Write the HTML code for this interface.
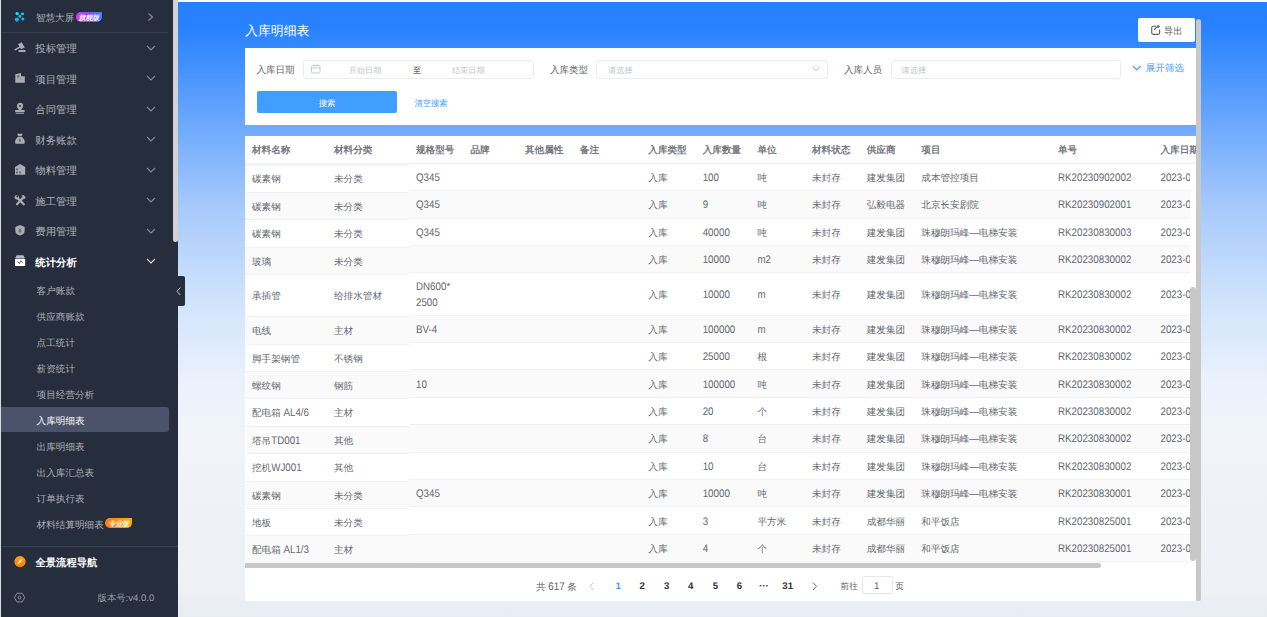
<!DOCTYPE html><html><head><meta charset="utf-8"><style>
html,body{margin:0;padding:0;}
body{width:1267px;height:617px;overflow:hidden;position:relative;font-family:"Liberation Sans",sans-serif;background:#eef2f8;text-rendering:geometricPrecision;}
.t{position:absolute;white-space:nowrap;}
.b{position:absolute;}
svg{position:absolute;overflow:visible;}
</style></head><body>
<div class="b" style="left:178px;top:0px;width:1089px;height:617px;background:linear-gradient(180deg,#2680ff 0px,#2882ff 28px,#a6c9fc 205px,#d0e3fc 300px,#eaf1fc 380px,#f0f4fa 430px,#edf1f6 590px,#e8ecf3 617px);"></div>
<div class="b" style="left:178px;top:0px;width:1089px;height:1.5px;background:#ffffff;"></div>
<div class="b" style="left:0px;top:0px;width:1px;height:617px;background:#d8dbe0;"></div>
<div class="b" style="left:1px;top:0px;width:177px;height:617px;background:#262e3d;"></div>
<div class="b" style="left:173px;top:0px;width:5px;height:242px;background:#d3d3d3;border-radius:0 0 2.5px 2.5px;"></div>
<div class="b" style="left:1px;top:32px;width:167px;height:1px;background:#363e4e;"></div>
<div class="t" style="left:35.9px;top:11px;height:16px;line-height:16px;font-size:9.6px;color:#adb1b8;font-weight:400;">智慧大屏</div>
<div class="t" style="left:35.2px;top:42px;height:16px;line-height:16px;font-size:10.45px;color:#adb1b8;font-weight:400;">投标管理</div>
<div class="t" style="left:35.2px;top:73px;height:16px;line-height:16px;font-size:10.45px;color:#adb1b8;font-weight:400;">项目管理</div>
<div class="t" style="left:35.2px;top:103px;height:16px;line-height:16px;font-size:10.45px;color:#adb1b8;font-weight:400;">合同管理</div>
<div class="t" style="left:35.2px;top:134px;height:16px;line-height:16px;font-size:10.45px;color:#adb1b8;font-weight:400;">财务账款</div>
<div class="t" style="left:35.2px;top:164px;height:16px;line-height:16px;font-size:10.45px;color:#adb1b8;font-weight:400;">物料管理</div>
<div class="t" style="left:35.2px;top:195px;height:16px;line-height:16px;font-size:10.45px;color:#adb1b8;font-weight:400;">施工管理</div>
<div class="t" style="left:35.2px;top:225px;height:16px;line-height:16px;font-size:10.45px;color:#adb1b8;font-weight:400;">费用管理</div>
<div class="t" style="left:35.2px;top:256px;height:16px;line-height:16px;font-size:10.45px;color:#ffffff;font-weight:700;">统计分析</div>
<div class="b" style="left:76.1px;top:12.1px;width:26.3px;height:9.6px;border-radius:4.8px 0 4.8px 4.8px;background:linear-gradient(90deg,#d83cf6,#8a4ff2 50%,#3a80f6);"></div>
<div class="t" style="left:78.5px;top:11px;height:16px;line-height:16px;font-size:6.9px;color:#f4eaff;font-weight:700;font-style:italic;">旗舰版</div>
<svg width="10" height="10" style="left:146px;top:12px"><path d="M2.5 1.5 L6.5 5 L2.5 8.5" stroke="#8a8f97" stroke-width="1.1" fill="none"/></svg>
<svg width="10" height="6" style="left:145.5px;top:44.5px"><path d="M1 1 L5 5 L9 1" stroke="#858a92" stroke-width="1.1" fill="none"/></svg>
<svg width="10" height="6" style="left:145.5px;top:75.0px"><path d="M1 1 L5 5 L9 1" stroke="#858a92" stroke-width="1.1" fill="none"/></svg>
<svg width="10" height="6" style="left:145.5px;top:105.5px"><path d="M1 1 L5 5 L9 1" stroke="#858a92" stroke-width="1.1" fill="none"/></svg>
<svg width="10" height="6" style="left:145.5px;top:136.0px"><path d="M1 1 L5 5 L9 1" stroke="#858a92" stroke-width="1.1" fill="none"/></svg>
<svg width="10" height="6" style="left:145.5px;top:166.5px"><path d="M1 1 L5 5 L9 1" stroke="#858a92" stroke-width="1.1" fill="none"/></svg>
<svg width="10" height="6" style="left:145.5px;top:197.1px"><path d="M1 1 L5 5 L9 1" stroke="#858a92" stroke-width="1.1" fill="none"/></svg>
<svg width="10" height="6" style="left:145.5px;top:227.6px"><path d="M1 1 L5 5 L9 1" stroke="#858a92" stroke-width="1.1" fill="none"/></svg>
<svg width="10" height="6" style="left:145.5px;top:258.1px"><path d="M1 1 L5 5 L9 1" stroke="#e8e9ec" stroke-width="1.1" fill="none"/></svg>
<svg width="16" height="16" viewBox="0 0 16 16" style="left:12px;top:9px"><circle cx="5.2" cy="4.6" r="1.7" fill="#16e6f2"/><circle cx="10.5" cy="4.9" r="1.4" fill="#14def5"/><circle cx="7.9" cy="7.4" r="1.35" fill="#10d2f8"/><circle cx="4.9" cy="10.6" r="2.1" fill="#12aef6"/><circle cx="10.8" cy="9.9" r="1.5" fill="#16b8f8"/></svg>
<svg width="16" height="16" viewBox="0 0 16 16" style="left:12px;top:40px"><path d="M6 4.3 L9.6 2.3 L12.8 7.4 L9.2 9.3 Z" fill="#a9aeb6"/><path d="M3.3 9.6 L7.8 7.1" stroke="#a9aeb6" stroke-width="1.6" stroke-linecap="round"/><rect x="6.6" y="10.1" width="6.9" height="1.9" rx="0.3" fill="#a9aeb6"/></svg>
<svg width="16" height="16" viewBox="0 0 16 16" style="left:12px;top:70px"><path d="M3.3 4.2 L9 3 L9 6.3 L12.8 6.3 L12.8 12.8 L3.3 12.8 Z" fill="#a9aeb6"/><rect x="5.2" y="5.3" width="2" height="2.2" fill="#5a6170"/><rect x="8.5" y="8" width="1" height="2" fill="#8a909a"/></svg>
<svg width="16" height="16" viewBox="0 0 16 16" style="left:12px;top:101px"><circle cx="8" cy="4.9" r="2.05" stroke="#a9aeb6" stroke-width="2.1" fill="none"/><rect x="6.6" y="6.8" width="2.8" height="2.5" fill="#a9aeb6"/><rect x="3" y="9" width="9.8" height="2" rx="0.8" fill="#a9aeb6"/><rect x="3.8" y="11.6" width="8.2" height="1.3" fill="#a9aeb6" opacity="0.85"/></svg>
<svg width="16" height="16" viewBox="0 0 16 16" style="left:12px;top:131px"><path d="M5.2 3 Q6.5 2.2 7.9 3.1 Q9.3 2.2 10.6 3 L9.6 4.9 L6.2 4.9 Z" fill="#a9aeb6"/><path d="M5.8 5.8 L10 5.8 Q12.8 8.5 12.8 11.8 Q12.8 12.8 11.8 12.8 L4 12.8 Q3 12.8 3 11.8 Q3 8.5 5.8 5.8 Z" fill="#a9aeb6"/><ellipse cx="7.9" cy="9.3" rx="0.9" ry="1.5" fill="#5a6170"/></svg>
<svg width="16" height="16" viewBox="0 0 16 16" style="left:12px;top:161px"><path d="M3 6 L8 3 L13.2 6 L13.2 13.8 L3 13.8 Z" fill="#a9aeb6"/><rect x="4.2" y="7.5" width="1.6" height="1.7" fill="#4a5160"/><rect x="4.2" y="10.6" width="1.6" height="1.6" fill="#4a5160"/><rect x="7.2" y="10.6" width="1.6" height="1.6" fill="#4a5160"/></svg>
<svg width="16" height="16" viewBox="0 0 16 16" style="left:12px;top:192px"><path d="M5 12.3 L11.3 5.5" stroke="#a9aeb6" stroke-width="2.2" stroke-linecap="round"/><path d="M5.5 6 L11.8 12.3" stroke="#a9aeb6" stroke-width="2.2" stroke-linecap="round"/><circle cx="4.8" cy="5.2" r="2.2" fill="#a9aeb6"/><circle cx="5.3" cy="4.2" r="1" fill="#262e3d"/><path d="M9.4 3.5 L11.5 3 L13.8 5.5 L12.3 7 Z" fill="#a9aeb6"/></svg>
<svg width="16" height="16" viewBox="0 0 16 16" style="left:12px;top:222px"><path d="M8 3.1 L12.7 4.9 L12.7 8.8 Q12.7 12.3 8 13.6 Q3.3 12.3 3.3 8.8 L3.3 4.9 Z" fill="#a9aeb6"/><path d="M6.6 6.2 L8 8 L9.4 6.2 M6.5 8.6 H9.5 M6.5 9.8 H9.5 M8 8 V10.8" stroke="#5a6170" stroke-width="0.8" fill="none"/></svg>
<svg width="16" height="16" viewBox="0 0 16 16" style="left:12px;top:252px"><path d="M4.6 3.2 L11.4 3.2 L13 6.5 L3 6.5 Z" fill="#b4b8bf"/><rect x="3" y="7" width="10.2" height="7" fill="#ffffff"/><path d="M5.5 9.5 L7.4 11.6 L8.8 8.6 L10.6 10.6" stroke="#4a5160" stroke-width="0.9" fill="none"/></svg>
<div class="b" style="left:1px;top:406.8px;width:167.7px;height:25.7px;background:#4a5369;border-radius:0 3px 3px 0;"></div>
<div class="t" style="left:36.6px;top:284px;height:16px;line-height:16px;font-size:9.6px;color:#adb1b8;font-weight:400;">客户账款</div>
<div class="t" style="left:36.6px;top:310px;height:16px;line-height:16px;font-size:9.6px;color:#adb1b8;font-weight:400;">供应商账款</div>
<div class="t" style="left:36.6px;top:336px;height:16px;line-height:16px;font-size:9.6px;color:#adb1b8;font-weight:400;">点工统计</div>
<div class="t" style="left:36.6px;top:362px;height:16px;line-height:16px;font-size:9.6px;color:#adb1b8;font-weight:400;">薪资统计</div>
<div class="t" style="left:36.6px;top:388px;height:16px;line-height:16px;font-size:9.6px;color:#adb1b8;font-weight:400;">项目经营分析</div>
<div class="t" style="left:36.6px;top:414px;height:16px;line-height:16px;font-size:9.6px;color:#ffffff;font-weight:400;">入库明细表</div>
<div class="t" style="left:36.6px;top:440px;height:16px;line-height:16px;font-size:9.6px;color:#adb1b8;font-weight:400;">出库明细表</div>
<div class="t" style="left:36.6px;top:466px;height:16px;line-height:16px;font-size:9.6px;color:#adb1b8;font-weight:400;">出入库汇总表</div>
<div class="t" style="left:36.6px;top:492px;height:16px;line-height:16px;font-size:9.6px;color:#adb1b8;font-weight:400;">订单执行表</div>
<div class="t" style="left:36.6px;top:518px;height:16px;line-height:16px;font-size:9.6px;color:#adb1b8;font-weight:400;">材料结算明细表</div>
<div class="b" style="left:105px;top:518.2px;width:27.1px;height:9.8px;border-radius:4.9px 0 4.9px 4.9px;background:linear-gradient(90deg,#ff7d1f,#ffaa0a);"></div>
<div class="t" style="left:108.5px;top:517px;height:16px;line-height:16px;font-size:6.9px;color:#fff3e0;font-weight:700;font-style:italic;">专业版</div>
<div class="t" style="left:36.6px;top:544px;height:16px;line-height:16px;font-size:9.6px;color:#adb1b8;font-weight:400;">库存统计表</div>
<div class="b" style="left:1px;top:546.5px;width:177px;height:71px;background:#262e3d;"></div>
<div class="b" style="left:1px;top:546px;width:177px;height:1px;background:#3a4252;"></div>
<svg width="12" height="12" style="left:14.35px;top:556.25px"><defs><linearGradient id="cg" x1="0" y1="0" x2="0" y2="1"><stop offset="0" stop-color="#ffa51c"/><stop offset="1" stop-color="#ff7800"/></linearGradient></defs><circle cx="6" cy="5.6" r="5.6" fill="url(#cg)"/><path d="M8.8 2.8 L6.6 6.4 L3.2 8.4 L5.4 4.8 Z" fill="#ffffff" opacity="0.9"/></svg>
<div class="t" style="left:35.5px;top:556px;height:16px;line-height:16px;font-size:10.3px;color:#ffffff;font-weight:700;">全景流程导航</div>
<svg width="12" height="12" style="left:14px;top:591.6px"><path d="M3 1.3 L8.2 1.3 L10.8 5.6 L8.2 9.9 L3 9.9 L0.4 5.6 Z" stroke="#8d929a" stroke-width="1" fill="none" stroke-linejoin="round"/><circle cx="5.6" cy="5.6" r="1.4" stroke="#8d929a" stroke-width="0.9" fill="none"/></svg>
<div class="t" style="left:97.6px;top:590px;height:16px;line-height:16px;font-size:9.3px;color:#9a9ea6;font-weight:400;">版本号<span style="font-size:9.6px">:v4.0.0</span></div>
<div class="b" style="left:178px;top:276.2px;width:6.8px;height:29.4px;background:#262e3d;border-radius:0 2px 2px 0;"></div>
<svg width="6" height="9" style="left:175.5px;top:287px"><path d="M4.3 0.6 L1 4.3 L4.3 8" stroke="#c8ccd2" stroke-width="1" fill="none"/></svg>
<div class="t" style="left:245px;top:23px;height:16px;line-height:16px;font-size:12.9px;color:#ffffff;font-weight:400;">入库明细表</div>
<div class="b" style="left:1137.9px;top:18px;width:57.3px;height:23.8px;background:#ffffff;border-radius:2px;"></div>
<svg width="16" height="16" viewBox="0 0 16 16" style="left:1148px;top:22px"><path d="M8.3 4.2 H5.2 Q3.7 4.2 3.7 5.7 V10.8 Q3.7 12.3 5.2 12.3 H10.1 Q11.6 12.3 11.6 10.8 V7.4" stroke="#606266" stroke-width="1.15" fill="none"/><path d="M6.3 7.9 Q7.3 5.6 10 4.6" stroke="#606266" stroke-width="1.15" fill="none"/><path d="M9.2 2.8 L12.2 4.2 L9.9 6.3 Z" fill="#606266"/></svg>
<div class="t" style="left:1164px;top:23px;height:16px;line-height:16px;font-size:9.3px;color:#606266;font-weight:400;">导出</div>
<div class="b" style="left:245px;top:48px;width:951px;height:77px;background:#ffffff;"></div>
<div class="t" style="left:256.4px;top:63px;height:16px;line-height:16px;font-size:9.5px;color:#606266;font-weight:400;">入库日期</div>
<div class="b" style="left:303.3px;top:59.9px;width:230.5px;height:18.7px;border:1px solid #e9ebf0;border-radius:2.5px;box-sizing:border-box;"></div>
<svg width="10" height="10" style="left:310.5px;top:64.3px"><rect x="0.5" y="1.5" width="8.5" height="7.5" rx="1" stroke="#c0c4cc" stroke-width="0.9" fill="none"/><path d="M0.5 4 H9 M3 0.5 V2.5 M6.5 0.5 V2.5" stroke="#c0c4cc" stroke-width="0.9"/></svg>
<div class="t" style="left:348.7px;top:63px;height:16px;line-height:16px;font-size:8.2px;color:#c0c4cc;font-weight:400;">开始日期</div>
<div class="t" style="left:413px;top:63px;height:16px;line-height:16px;font-size:8.2px;color:#303133;font-weight:400;">至</div>
<div class="t" style="left:451.9px;top:63px;height:16px;line-height:16px;font-size:8.2px;color:#c0c4cc;font-weight:400;">结束日期</div>
<div class="t" style="left:549.9px;top:63px;height:16px;line-height:16px;font-size:9.5px;color:#606266;font-weight:400;">入库类型</div>
<div class="b" style="left:596.4px;top:59.9px;width:231.3px;height:18.7px;border:1px solid #e9ebf0;border-radius:2.5px;box-sizing:border-box;"></div>
<div class="t" style="left:608px;top:63px;height:16px;line-height:16px;font-size:8.2px;color:#c0c4cc;font-weight:400;">请选择</div>
<svg width="8" height="5" style="left:811.5px;top:67px"><path d="M0.5 0.5 L4 4 L7.5 0.5" stroke="#c0c4cc" stroke-width="0.9" fill="none"/></svg>
<div class="t" style="left:843.9px;top:63px;height:16px;line-height:16px;font-size:9.5px;color:#606266;font-weight:400;">入库人员</div>
<div class="b" style="left:890.6px;top:59.7px;width:230.9px;height:19px;border:1px solid #e9ebf0;border-radius:2.5px;box-sizing:border-box;"></div>
<div class="t" style="left:901.6px;top:63px;height:16px;line-height:16px;font-size:8.2px;color:#c0c4cc;font-weight:400;">请选择</div>
<svg width="10" height="6" style="left:1131.8px;top:65px"><path d="M0.8 0.8 L4.8 4.8 L8.8 0.8" stroke="#409eff" stroke-width="1.2" fill="none"/></svg>
<div class="t" style="left:1145.7px;top:61px;height:16px;line-height:16px;font-size:9.6px;color:#409eff;font-weight:400;">展开筛选</div>
<div class="b" style="left:256.7px;top:91.4px;width:140.3px;height:22.1px;background:#409eff;border-radius:2px;"></div>
<div class="t" style="left:318.7px;top:95px;height:16px;line-height:16px;font-size:8.4px;color:#ffffff;font-weight:400;">搜索</div>
<div class="t" style="left:414.4px;top:95px;height:16px;line-height:16px;font-size:8.3px;color:#409eff;font-weight:400;">清空搜索</div>
<div class="b" style="left:245px;top:136px;width:951px;height:465px;background:#ffffff;border-radius:0 0 3px 3px;"></div>
<div class="t" style="left:252px;top:143px;height:16px;line-height:16px;font-size:9.6px;color:#75787e;font-weight:700;">材料名称</div>
<div class="t" style="left:334px;top:143px;height:16px;line-height:16px;font-size:9.6px;color:#75787e;font-weight:700;">材料分类</div>
<div class="t" style="left:416px;top:143px;height:16px;line-height:16px;font-size:9.6px;color:#75787e;font-weight:700;">规格型号</div>
<div class="t" style="left:470.5px;top:143px;height:16px;line-height:16px;font-size:9.6px;color:#75787e;font-weight:700;">品牌</div>
<div class="t" style="left:525px;top:143px;height:16px;line-height:16px;font-size:9.6px;color:#75787e;font-weight:700;">其他属性</div>
<div class="t" style="left:580px;top:143px;height:16px;line-height:16px;font-size:9.6px;color:#75787e;font-weight:700;">备注</div>
<div class="t" style="left:648.3px;top:143px;height:16px;line-height:16px;font-size:9.6px;color:#75787e;font-weight:700;">入库类型</div>
<div class="t" style="left:702.7px;top:143px;height:16px;line-height:16px;font-size:9.6px;color:#75787e;font-weight:700;">入库数量</div>
<div class="t" style="left:757.4px;top:143px;height:16px;line-height:16px;font-size:9.6px;color:#75787e;font-weight:700;">单位</div>
<div class="t" style="left:812px;top:143px;height:16px;line-height:16px;font-size:9.6px;color:#75787e;font-weight:700;">材料状态</div>
<div class="t" style="left:866.7px;top:143px;height:16px;line-height:16px;font-size:9.6px;color:#75787e;font-weight:700;">供应商</div>
<div class="t" style="left:921.3px;top:143px;height:16px;line-height:16px;font-size:9.6px;color:#75787e;font-weight:700;">项目</div>
<div class="t" style="left:1058px;top:143px;height:16px;line-height:16px;font-size:9.6px;color:#75787e;font-weight:700;">单号</div>
<div class="t" style="left:1160.5px;top:143px;height:16px;line-height:16px;font-size:9.6px;color:#75787e;font-weight:700;">入库日期</div>
<div class="b" style="left:409px;top:162.6px;width:787px;height:1.2px;background:#ebedf2;"></div>
<div class="b" style="left:409px;top:163px;width:781px;height:400px;overflow:hidden;">
<div class="b" style="left:0;top:0.80px;width:800px;height:27.40px;background:#ffffff;border-bottom:1px solid #f1f2f6;box-sizing:border-box;"></div>
<div class="t" style="left:7px;top:8px;height:16px;line-height:16px;font-size:9.6px;color:#66696e;font-weight:400;"><span style="font-size:9.77px;display:inline-block;transform:scaleY(1.12);transform-origin:0 7.8px">Q345</span></div>
<div class="t" style="left:239.29999999999995px;top:8px;height:16px;line-height:16px;font-size:9.6px;color:#66696e;font-weight:400;">入库</div>
<div class="t" style="left:293.70000000000005px;top:8px;height:16px;line-height:16px;font-size:9.6px;color:#66696e;font-weight:400;"><span style="font-size:9.77px;display:inline-block;transform:scaleY(1.12);transform-origin:0 7.8px">100</span></div>
<div class="t" style="left:348.4px;top:8px;height:16px;line-height:16px;font-size:9.6px;color:#66696e;font-weight:400;">吨</div>
<div class="t" style="left:403px;top:8px;height:16px;line-height:16px;font-size:9.6px;color:#66696e;font-weight:400;">未封存</div>
<div class="t" style="left:457.70000000000005px;top:8px;height:16px;line-height:16px;font-size:9.6px;color:#66696e;font-weight:400;">建发集团</div>
<div class="t" style="left:512.3px;top:8px;height:16px;line-height:16px;font-size:9.6px;color:#66696e;font-weight:400;">成本管控项目</div>
<div class="t" style="left:649px;top:8px;height:16px;line-height:16px;font-size:9.6px;color:#66696e;font-weight:400;"><span style="font-size:9.77px;display:inline-block;transform:scaleY(1.12);transform-origin:0 7.8px">RK20230902002</span></div>
<div class="t" style="left:751.5px;top:8px;height:16px;line-height:16px;font-size:9.6px;color:#66696e;font-weight:400;"><span style="font-size:9.77px;display:inline-block;transform:scaleY(1.12);transform-origin:0 7.8px">2023-0</span></div>
<div class="b" style="left:0;top:28.20px;width:800px;height:27.40px;background:#fafafa;border-bottom:1px solid #f1f2f6;box-sizing:border-box;"></div>
<div class="t" style="left:7px;top:35px;height:16px;line-height:16px;font-size:9.6px;color:#66696e;font-weight:400;"><span style="font-size:9.77px;display:inline-block;transform:scaleY(1.12);transform-origin:0 7.8px">Q345</span></div>
<div class="t" style="left:239.29999999999995px;top:35px;height:16px;line-height:16px;font-size:9.6px;color:#66696e;font-weight:400;">入库</div>
<div class="t" style="left:293.70000000000005px;top:35px;height:16px;line-height:16px;font-size:9.6px;color:#66696e;font-weight:400;"><span style="font-size:9.77px;display:inline-block;transform:scaleY(1.12);transform-origin:0 7.8px">9</span></div>
<div class="t" style="left:348.4px;top:35px;height:16px;line-height:16px;font-size:9.6px;color:#66696e;font-weight:400;">吨</div>
<div class="t" style="left:403px;top:35px;height:16px;line-height:16px;font-size:9.6px;color:#66696e;font-weight:400;">未封存</div>
<div class="t" style="left:457.70000000000005px;top:35px;height:16px;line-height:16px;font-size:9.6px;color:#66696e;font-weight:400;">弘毅电器</div>
<div class="t" style="left:512.3px;top:35px;height:16px;line-height:16px;font-size:9.6px;color:#66696e;font-weight:400;">北京长安剧院</div>
<div class="t" style="left:649px;top:35px;height:16px;line-height:16px;font-size:9.6px;color:#66696e;font-weight:400;"><span style="font-size:9.77px;display:inline-block;transform:scaleY(1.12);transform-origin:0 7.8px">RK20230902001</span></div>
<div class="t" style="left:751.5px;top:35px;height:16px;line-height:16px;font-size:9.6px;color:#66696e;font-weight:400;"><span style="font-size:9.77px;display:inline-block;transform:scaleY(1.12);transform-origin:0 7.8px">2023-0</span></div>
<div class="b" style="left:0;top:55.60px;width:800px;height:27.40px;background:#ffffff;border-bottom:1px solid #f1f2f6;box-sizing:border-box;"></div>
<div class="t" style="left:7px;top:63px;height:16px;line-height:16px;font-size:9.6px;color:#66696e;font-weight:400;"><span style="font-size:9.77px;display:inline-block;transform:scaleY(1.12);transform-origin:0 7.8px">Q345</span></div>
<div class="t" style="left:239.29999999999995px;top:63px;height:16px;line-height:16px;font-size:9.6px;color:#66696e;font-weight:400;">入库</div>
<div class="t" style="left:293.70000000000005px;top:63px;height:16px;line-height:16px;font-size:9.6px;color:#66696e;font-weight:400;"><span style="font-size:9.77px;display:inline-block;transform:scaleY(1.12);transform-origin:0 7.8px">40000</span></div>
<div class="t" style="left:348.4px;top:63px;height:16px;line-height:16px;font-size:9.6px;color:#66696e;font-weight:400;">吨</div>
<div class="t" style="left:403px;top:63px;height:16px;line-height:16px;font-size:9.6px;color:#66696e;font-weight:400;">未封存</div>
<div class="t" style="left:457.70000000000005px;top:63px;height:16px;line-height:16px;font-size:9.6px;color:#66696e;font-weight:400;">建发集团</div>
<div class="t" style="left:512.3px;top:63px;height:16px;line-height:16px;font-size:9.6px;color:#66696e;font-weight:400;">珠穆朗玛峰—电梯安装</div>
<div class="t" style="left:649px;top:63px;height:16px;line-height:16px;font-size:9.6px;color:#66696e;font-weight:400;"><span style="font-size:9.77px;display:inline-block;transform:scaleY(1.12);transform-origin:0 7.8px">RK20230830003</span></div>
<div class="t" style="left:751.5px;top:63px;height:16px;line-height:16px;font-size:9.6px;color:#66696e;font-weight:400;"><span style="font-size:9.77px;display:inline-block;transform:scaleY(1.12);transform-origin:0 7.8px">2023-0</span></div>
<div class="b" style="left:0;top:83.00px;width:800px;height:27.40px;background:#fafafa;border-bottom:1px solid #f1f2f6;box-sizing:border-box;"></div>
<div class="t" style="left:239.29999999999995px;top:90px;height:16px;line-height:16px;font-size:9.6px;color:#66696e;font-weight:400;">入库</div>
<div class="t" style="left:293.70000000000005px;top:90px;height:16px;line-height:16px;font-size:9.6px;color:#66696e;font-weight:400;"><span style="font-size:9.77px;display:inline-block;transform:scaleY(1.12);transform-origin:0 7.8px">10000</span></div>
<div class="t" style="left:348.4px;top:90px;height:16px;line-height:16px;font-size:9.6px;color:#66696e;font-weight:400;"><span style="font-size:9.77px;display:inline-block;transform:scaleY(1.12);transform-origin:0 7.8px">m2</span></div>
<div class="t" style="left:403px;top:90px;height:16px;line-height:16px;font-size:9.6px;color:#66696e;font-weight:400;">未封存</div>
<div class="t" style="left:457.70000000000005px;top:90px;height:16px;line-height:16px;font-size:9.6px;color:#66696e;font-weight:400;">建发集团</div>
<div class="t" style="left:512.3px;top:90px;height:16px;line-height:16px;font-size:9.6px;color:#66696e;font-weight:400;">珠穆朗玛峰—电梯安装</div>
<div class="t" style="left:649px;top:90px;height:16px;line-height:16px;font-size:9.6px;color:#66696e;font-weight:400;"><span style="font-size:9.77px;display:inline-block;transform:scaleY(1.12);transform-origin:0 7.8px">RK20230830002</span></div>
<div class="t" style="left:751.5px;top:90px;height:16px;line-height:16px;font-size:9.6px;color:#66696e;font-weight:400;"><span style="font-size:9.77px;display:inline-block;transform:scaleY(1.12);transform-origin:0 7.8px">2023-0</span></div>
<div class="b" style="left:0;top:110.40px;width:800px;height:42.20px;background:#ffffff;border-bottom:1px solid #f1f2f6;box-sizing:border-box;"></div>
<div class="t" style="left:7px;top:117px;height:16px;line-height:16px;font-size:9.6px;color:#66696e;font-weight:400;"><span style="font-size:9.77px;display:inline-block;transform:scaleY(1.12);transform-origin:0 7.8px">DN600*</span></div>
<div class="t" style="left:7px;top:133px;height:16px;line-height:16px;font-size:9.6px;color:#66696e;font-weight:400;"><span style="font-size:9.77px;display:inline-block;transform:scaleY(1.12);transform-origin:0 7.8px">2500</span></div>
<div class="t" style="left:239.29999999999995px;top:125px;height:16px;line-height:16px;font-size:9.6px;color:#66696e;font-weight:400;">入库</div>
<div class="t" style="left:293.70000000000005px;top:125px;height:16px;line-height:16px;font-size:9.6px;color:#66696e;font-weight:400;"><span style="font-size:9.77px;display:inline-block;transform:scaleY(1.12);transform-origin:0 7.8px">10000</span></div>
<div class="t" style="left:348.4px;top:125px;height:16px;line-height:16px;font-size:9.6px;color:#66696e;font-weight:400;"><span style="font-size:9.77px;display:inline-block;transform:scaleY(1.12);transform-origin:0 7.8px">m</span></div>
<div class="t" style="left:403px;top:125px;height:16px;line-height:16px;font-size:9.6px;color:#66696e;font-weight:400;">未封存</div>
<div class="t" style="left:457.70000000000005px;top:125px;height:16px;line-height:16px;font-size:9.6px;color:#66696e;font-weight:400;">建发集团</div>
<div class="t" style="left:512.3px;top:125px;height:16px;line-height:16px;font-size:9.6px;color:#66696e;font-weight:400;">珠穆朗玛峰—电梯安装</div>
<div class="t" style="left:649px;top:125px;height:16px;line-height:16px;font-size:9.6px;color:#66696e;font-weight:400;"><span style="font-size:9.77px;display:inline-block;transform:scaleY(1.12);transform-origin:0 7.8px">RK20230830002</span></div>
<div class="t" style="left:751.5px;top:125px;height:16px;line-height:16px;font-size:9.6px;color:#66696e;font-weight:400;"><span style="font-size:9.77px;display:inline-block;transform:scaleY(1.12);transform-origin:0 7.8px">2023-0</span></div>
<div class="b" style="left:0;top:152.60px;width:800px;height:27.40px;background:#fafafa;border-bottom:1px solid #f1f2f6;box-sizing:border-box;"></div>
<div class="t" style="left:7px;top:160px;height:16px;line-height:16px;font-size:9.6px;color:#66696e;font-weight:400;"><span style="font-size:9.77px;display:inline-block;transform:scaleY(1.12);transform-origin:0 7.8px">BV-4</span></div>
<div class="t" style="left:239.29999999999995px;top:160px;height:16px;line-height:16px;font-size:9.6px;color:#66696e;font-weight:400;">入库</div>
<div class="t" style="left:293.70000000000005px;top:160px;height:16px;line-height:16px;font-size:9.6px;color:#66696e;font-weight:400;"><span style="font-size:9.77px;display:inline-block;transform:scaleY(1.12);transform-origin:0 7.8px">100000</span></div>
<div class="t" style="left:348.4px;top:160px;height:16px;line-height:16px;font-size:9.6px;color:#66696e;font-weight:400;"><span style="font-size:9.77px;display:inline-block;transform:scaleY(1.12);transform-origin:0 7.8px">m</span></div>
<div class="t" style="left:403px;top:160px;height:16px;line-height:16px;font-size:9.6px;color:#66696e;font-weight:400;">未封存</div>
<div class="t" style="left:457.70000000000005px;top:160px;height:16px;line-height:16px;font-size:9.6px;color:#66696e;font-weight:400;">建发集团</div>
<div class="t" style="left:512.3px;top:160px;height:16px;line-height:16px;font-size:9.6px;color:#66696e;font-weight:400;">珠穆朗玛峰—电梯安装</div>
<div class="t" style="left:649px;top:160px;height:16px;line-height:16px;font-size:9.6px;color:#66696e;font-weight:400;"><span style="font-size:9.77px;display:inline-block;transform:scaleY(1.12);transform-origin:0 7.8px">RK20230830002</span></div>
<div class="t" style="left:751.5px;top:160px;height:16px;line-height:16px;font-size:9.6px;color:#66696e;font-weight:400;"><span style="font-size:9.77px;display:inline-block;transform:scaleY(1.12);transform-origin:0 7.8px">2023-0</span></div>
<div class="b" style="left:0;top:180.00px;width:800px;height:27.40px;background:#ffffff;border-bottom:1px solid #f1f2f6;box-sizing:border-box;"></div>
<div class="t" style="left:239.29999999999995px;top:187px;height:16px;line-height:16px;font-size:9.6px;color:#66696e;font-weight:400;">入库</div>
<div class="t" style="left:293.70000000000005px;top:187px;height:16px;line-height:16px;font-size:9.6px;color:#66696e;font-weight:400;"><span style="font-size:9.77px;display:inline-block;transform:scaleY(1.12);transform-origin:0 7.8px">25000</span></div>
<div class="t" style="left:348.4px;top:187px;height:16px;line-height:16px;font-size:9.6px;color:#66696e;font-weight:400;">根</div>
<div class="t" style="left:403px;top:187px;height:16px;line-height:16px;font-size:9.6px;color:#66696e;font-weight:400;">未封存</div>
<div class="t" style="left:457.70000000000005px;top:187px;height:16px;line-height:16px;font-size:9.6px;color:#66696e;font-weight:400;">建发集团</div>
<div class="t" style="left:512.3px;top:187px;height:16px;line-height:16px;font-size:9.6px;color:#66696e;font-weight:400;">珠穆朗玛峰—电梯安装</div>
<div class="t" style="left:649px;top:187px;height:16px;line-height:16px;font-size:9.6px;color:#66696e;font-weight:400;"><span style="font-size:9.77px;display:inline-block;transform:scaleY(1.12);transform-origin:0 7.8px">RK20230830002</span></div>
<div class="t" style="left:751.5px;top:187px;height:16px;line-height:16px;font-size:9.6px;color:#66696e;font-weight:400;"><span style="font-size:9.77px;display:inline-block;transform:scaleY(1.12);transform-origin:0 7.8px">2023-0</span></div>
<div class="b" style="left:0;top:207.40px;width:800px;height:27.40px;background:#fafafa;border-bottom:1px solid #f1f2f6;box-sizing:border-box;"></div>
<div class="t" style="left:7px;top:215px;height:16px;line-height:16px;font-size:9.6px;color:#66696e;font-weight:400;"><span style="font-size:9.77px;display:inline-block;transform:scaleY(1.12);transform-origin:0 7.8px">10</span></div>
<div class="t" style="left:239.29999999999995px;top:215px;height:16px;line-height:16px;font-size:9.6px;color:#66696e;font-weight:400;">入库</div>
<div class="t" style="left:293.70000000000005px;top:215px;height:16px;line-height:16px;font-size:9.6px;color:#66696e;font-weight:400;"><span style="font-size:9.77px;display:inline-block;transform:scaleY(1.12);transform-origin:0 7.8px">100000</span></div>
<div class="t" style="left:348.4px;top:215px;height:16px;line-height:16px;font-size:9.6px;color:#66696e;font-weight:400;">吨</div>
<div class="t" style="left:403px;top:215px;height:16px;line-height:16px;font-size:9.6px;color:#66696e;font-weight:400;">未封存</div>
<div class="t" style="left:457.70000000000005px;top:215px;height:16px;line-height:16px;font-size:9.6px;color:#66696e;font-weight:400;">建发集团</div>
<div class="t" style="left:512.3px;top:215px;height:16px;line-height:16px;font-size:9.6px;color:#66696e;font-weight:400;">珠穆朗玛峰—电梯安装</div>
<div class="t" style="left:649px;top:215px;height:16px;line-height:16px;font-size:9.6px;color:#66696e;font-weight:400;"><span style="font-size:9.77px;display:inline-block;transform:scaleY(1.12);transform-origin:0 7.8px">RK20230830002</span></div>
<div class="t" style="left:751.5px;top:215px;height:16px;line-height:16px;font-size:9.6px;color:#66696e;font-weight:400;"><span style="font-size:9.77px;display:inline-block;transform:scaleY(1.12);transform-origin:0 7.8px">2023-0</span></div>
<div class="b" style="left:0;top:234.80px;width:800px;height:27.40px;background:#ffffff;border-bottom:1px solid #f1f2f6;box-sizing:border-box;"></div>
<div class="t" style="left:239.29999999999995px;top:242px;height:16px;line-height:16px;font-size:9.6px;color:#66696e;font-weight:400;">入库</div>
<div class="t" style="left:293.70000000000005px;top:242px;height:16px;line-height:16px;font-size:9.6px;color:#66696e;font-weight:400;"><span style="font-size:9.77px;display:inline-block;transform:scaleY(1.12);transform-origin:0 7.8px">20</span></div>
<div class="t" style="left:348.4px;top:242px;height:16px;line-height:16px;font-size:9.6px;color:#66696e;font-weight:400;">个</div>
<div class="t" style="left:403px;top:242px;height:16px;line-height:16px;font-size:9.6px;color:#66696e;font-weight:400;">未封存</div>
<div class="t" style="left:457.70000000000005px;top:242px;height:16px;line-height:16px;font-size:9.6px;color:#66696e;font-weight:400;">建发集团</div>
<div class="t" style="left:512.3px;top:242px;height:16px;line-height:16px;font-size:9.6px;color:#66696e;font-weight:400;">珠穆朗玛峰—电梯安装</div>
<div class="t" style="left:649px;top:242px;height:16px;line-height:16px;font-size:9.6px;color:#66696e;font-weight:400;"><span style="font-size:9.77px;display:inline-block;transform:scaleY(1.12);transform-origin:0 7.8px">RK20230830002</span></div>
<div class="t" style="left:751.5px;top:242px;height:16px;line-height:16px;font-size:9.6px;color:#66696e;font-weight:400;"><span style="font-size:9.77px;display:inline-block;transform:scaleY(1.12);transform-origin:0 7.8px">2023-0</span></div>
<div class="b" style="left:0;top:262.20px;width:800px;height:27.40px;background:#fafafa;border-bottom:1px solid #f1f2f6;box-sizing:border-box;"></div>
<div class="t" style="left:239.29999999999995px;top:269px;height:16px;line-height:16px;font-size:9.6px;color:#66696e;font-weight:400;">入库</div>
<div class="t" style="left:293.70000000000005px;top:269px;height:16px;line-height:16px;font-size:9.6px;color:#66696e;font-weight:400;"><span style="font-size:9.77px;display:inline-block;transform:scaleY(1.12);transform-origin:0 7.8px">8</span></div>
<div class="t" style="left:348.4px;top:269px;height:16px;line-height:16px;font-size:9.6px;color:#66696e;font-weight:400;">台</div>
<div class="t" style="left:403px;top:269px;height:16px;line-height:16px;font-size:9.6px;color:#66696e;font-weight:400;">未封存</div>
<div class="t" style="left:457.70000000000005px;top:269px;height:16px;line-height:16px;font-size:9.6px;color:#66696e;font-weight:400;">建发集团</div>
<div class="t" style="left:512.3px;top:269px;height:16px;line-height:16px;font-size:9.6px;color:#66696e;font-weight:400;">珠穆朗玛峰—电梯安装</div>
<div class="t" style="left:649px;top:269px;height:16px;line-height:16px;font-size:9.6px;color:#66696e;font-weight:400;"><span style="font-size:9.77px;display:inline-block;transform:scaleY(1.12);transform-origin:0 7.8px">RK20230830002</span></div>
<div class="t" style="left:751.5px;top:269px;height:16px;line-height:16px;font-size:9.6px;color:#66696e;font-weight:400;"><span style="font-size:9.77px;display:inline-block;transform:scaleY(1.12);transform-origin:0 7.8px">2023-0</span></div>
<div class="b" style="left:0;top:289.60px;width:800px;height:27.40px;background:#ffffff;border-bottom:1px solid #f1f2f6;box-sizing:border-box;"></div>
<div class="t" style="left:239.29999999999995px;top:297px;height:16px;line-height:16px;font-size:9.6px;color:#66696e;font-weight:400;">入库</div>
<div class="t" style="left:293.70000000000005px;top:297px;height:16px;line-height:16px;font-size:9.6px;color:#66696e;font-weight:400;"><span style="font-size:9.77px;display:inline-block;transform:scaleY(1.12);transform-origin:0 7.8px">10</span></div>
<div class="t" style="left:348.4px;top:297px;height:16px;line-height:16px;font-size:9.6px;color:#66696e;font-weight:400;">台</div>
<div class="t" style="left:403px;top:297px;height:16px;line-height:16px;font-size:9.6px;color:#66696e;font-weight:400;">未封存</div>
<div class="t" style="left:457.70000000000005px;top:297px;height:16px;line-height:16px;font-size:9.6px;color:#66696e;font-weight:400;">建发集团</div>
<div class="t" style="left:512.3px;top:297px;height:16px;line-height:16px;font-size:9.6px;color:#66696e;font-weight:400;">珠穆朗玛峰—电梯安装</div>
<div class="t" style="left:649px;top:297px;height:16px;line-height:16px;font-size:9.6px;color:#66696e;font-weight:400;"><span style="font-size:9.77px;display:inline-block;transform:scaleY(1.12);transform-origin:0 7.8px">RK20230830002</span></div>
<div class="t" style="left:751.5px;top:297px;height:16px;line-height:16px;font-size:9.6px;color:#66696e;font-weight:400;"><span style="font-size:9.77px;display:inline-block;transform:scaleY(1.12);transform-origin:0 7.8px">2023-0</span></div>
<div class="b" style="left:0;top:317.00px;width:800px;height:27.40px;background:#fafafa;border-bottom:1px solid #f1f2f6;box-sizing:border-box;"></div>
<div class="t" style="left:7px;top:324px;height:16px;line-height:16px;font-size:9.6px;color:#66696e;font-weight:400;"><span style="font-size:9.77px;display:inline-block;transform:scaleY(1.12);transform-origin:0 7.8px">Q345</span></div>
<div class="t" style="left:239.29999999999995px;top:324px;height:16px;line-height:16px;font-size:9.6px;color:#66696e;font-weight:400;">入库</div>
<div class="t" style="left:293.70000000000005px;top:324px;height:16px;line-height:16px;font-size:9.6px;color:#66696e;font-weight:400;"><span style="font-size:9.77px;display:inline-block;transform:scaleY(1.12);transform-origin:0 7.8px">10000</span></div>
<div class="t" style="left:348.4px;top:324px;height:16px;line-height:16px;font-size:9.6px;color:#66696e;font-weight:400;">吨</div>
<div class="t" style="left:403px;top:324px;height:16px;line-height:16px;font-size:9.6px;color:#66696e;font-weight:400;">未封存</div>
<div class="t" style="left:457.70000000000005px;top:324px;height:16px;line-height:16px;font-size:9.6px;color:#66696e;font-weight:400;">建发集团</div>
<div class="t" style="left:512.3px;top:324px;height:16px;line-height:16px;font-size:9.6px;color:#66696e;font-weight:400;">珠穆朗玛峰—电梯安装</div>
<div class="t" style="left:649px;top:324px;height:16px;line-height:16px;font-size:9.6px;color:#66696e;font-weight:400;"><span style="font-size:9.77px;display:inline-block;transform:scaleY(1.12);transform-origin:0 7.8px">RK20230830001</span></div>
<div class="t" style="left:751.5px;top:324px;height:16px;line-height:16px;font-size:9.6px;color:#66696e;font-weight:400;"><span style="font-size:9.77px;display:inline-block;transform:scaleY(1.12);transform-origin:0 7.8px">2023-0</span></div>
<div class="b" style="left:0;top:344.40px;width:800px;height:27.40px;background:#ffffff;border-bottom:1px solid #f1f2f6;box-sizing:border-box;"></div>
<div class="t" style="left:239.29999999999995px;top:352px;height:16px;line-height:16px;font-size:9.6px;color:#66696e;font-weight:400;">入库</div>
<div class="t" style="left:293.70000000000005px;top:352px;height:16px;line-height:16px;font-size:9.6px;color:#66696e;font-weight:400;"><span style="font-size:9.77px;display:inline-block;transform:scaleY(1.12);transform-origin:0 7.8px">3</span></div>
<div class="t" style="left:348.4px;top:352px;height:16px;line-height:16px;font-size:9.6px;color:#66696e;font-weight:400;">平方米</div>
<div class="t" style="left:403px;top:352px;height:16px;line-height:16px;font-size:9.6px;color:#66696e;font-weight:400;">未封存</div>
<div class="t" style="left:457.70000000000005px;top:352px;height:16px;line-height:16px;font-size:9.6px;color:#66696e;font-weight:400;">成都华丽</div>
<div class="t" style="left:512.3px;top:352px;height:16px;line-height:16px;font-size:9.6px;color:#66696e;font-weight:400;">和平饭店</div>
<div class="t" style="left:649px;top:352px;height:16px;line-height:16px;font-size:9.6px;color:#66696e;font-weight:400;"><span style="font-size:9.77px;display:inline-block;transform:scaleY(1.12);transform-origin:0 7.8px">RK20230825001</span></div>
<div class="t" style="left:751.5px;top:352px;height:16px;line-height:16px;font-size:9.6px;color:#66696e;font-weight:400;"><span style="font-size:9.77px;display:inline-block;transform:scaleY(1.12);transform-origin:0 7.8px">2023-0</span></div>
<div class="b" style="left:0;top:371.80px;width:800px;height:27.40px;background:#fafafa;border-bottom:1px solid #f1f2f6;box-sizing:border-box;"></div>
<div class="t" style="left:239.29999999999995px;top:379px;height:16px;line-height:16px;font-size:9.6px;color:#66696e;font-weight:400;">入库</div>
<div class="t" style="left:293.70000000000005px;top:379px;height:16px;line-height:16px;font-size:9.6px;color:#66696e;font-weight:400;"><span style="font-size:9.77px;display:inline-block;transform:scaleY(1.12);transform-origin:0 7.8px">4</span></div>
<div class="t" style="left:348.4px;top:379px;height:16px;line-height:16px;font-size:9.6px;color:#66696e;font-weight:400;">个</div>
<div class="t" style="left:403px;top:379px;height:16px;line-height:16px;font-size:9.6px;color:#66696e;font-weight:400;">未封存</div>
<div class="t" style="left:457.70000000000005px;top:379px;height:16px;line-height:16px;font-size:9.6px;color:#66696e;font-weight:400;">成都华丽</div>
<div class="t" style="left:512.3px;top:379px;height:16px;line-height:16px;font-size:9.6px;color:#66696e;font-weight:400;">和平饭店</div>
<div class="t" style="left:649px;top:379px;height:16px;line-height:16px;font-size:9.6px;color:#66696e;font-weight:400;"><span style="font-size:9.77px;display:inline-block;transform:scaleY(1.12);transform-origin:0 7.8px">RK20230825001</span></div>
<div class="t" style="left:751.5px;top:379px;height:16px;line-height:16px;font-size:9.6px;color:#66696e;font-weight:400;"><span style="font-size:9.77px;display:inline-block;transform:scaleY(1.12);transform-origin:0 7.8px">2023-0</span></div>
</div>
<div class="b" style="left:245px;top:136px;width:164px;height:427px;overflow:hidden;">
<div class="b" style="left:0;top:0;width:164px;height:29.4px;background:linear-gradient(180deg,#ffffff 0,#ffffff 25.6px,#f5f6f9 27px,#f0f2f5 29.4px);"></div>
<div class="t" style="left:7px;top:7px;height:16px;line-height:16px;font-size:9.6px;color:#75787e;font-weight:700;">材料名称</div>
<div class="t" style="left:89px;top:7px;height:16px;line-height:16px;font-size:9.6px;color:#75787e;font-weight:700;">材料分类</div>
<div class="b" style="left:0;top:29.40px;width:164px;height:27.40px;background:#ffffff;border-bottom:1px solid #f1f2f6;box-sizing:border-box;"></div>
<div class="t" style="left:7px;top:36px;height:16px;line-height:16px;font-size:9.6px;color:#66696e;font-weight:400;">碳素钢</div>
<div class="t" style="left:89px;top:36px;height:16px;line-height:16px;font-size:9.6px;color:#66696e;font-weight:400;">未分类</div>
<div class="b" style="left:0;top:56.80px;width:164px;height:27.40px;background:#fafafa;border-bottom:1px solid #f1f2f6;box-sizing:border-box;"></div>
<div class="t" style="left:7px;top:64px;height:16px;line-height:16px;font-size:9.6px;color:#66696e;font-weight:400;">碳素钢</div>
<div class="t" style="left:89px;top:64px;height:16px;line-height:16px;font-size:9.6px;color:#66696e;font-weight:400;">未分类</div>
<div class="b" style="left:0;top:84.20px;width:164px;height:27.40px;background:#ffffff;border-bottom:1px solid #f1f2f6;box-sizing:border-box;"></div>
<div class="t" style="left:7px;top:91px;height:16px;line-height:16px;font-size:9.6px;color:#66696e;font-weight:400;">碳素钢</div>
<div class="t" style="left:89px;top:91px;height:16px;line-height:16px;font-size:9.6px;color:#66696e;font-weight:400;">未分类</div>
<div class="b" style="left:0;top:111.60px;width:164px;height:27.40px;background:#fafafa;border-bottom:1px solid #f1f2f6;box-sizing:border-box;"></div>
<div class="t" style="left:7px;top:119px;height:16px;line-height:16px;font-size:9.6px;color:#66696e;font-weight:400;">玻璃</div>
<div class="t" style="left:89px;top:119px;height:16px;line-height:16px;font-size:9.6px;color:#66696e;font-weight:400;">未分类</div>
<div class="b" style="left:0;top:139.00px;width:164px;height:42.20px;background:#ffffff;border-bottom:1px solid #f1f2f6;box-sizing:border-box;"></div>
<div class="t" style="left:7px;top:153px;height:16px;line-height:16px;font-size:9.6px;color:#66696e;font-weight:400;">承插管</div>
<div class="t" style="left:89px;top:153px;height:16px;line-height:16px;font-size:9.6px;color:#66696e;font-weight:400;">给排水管材</div>
<div class="b" style="left:0;top:181.20px;width:164px;height:27.40px;background:#fafafa;border-bottom:1px solid #f1f2f6;box-sizing:border-box;"></div>
<div class="t" style="left:7px;top:188px;height:16px;line-height:16px;font-size:9.6px;color:#66696e;font-weight:400;">电线</div>
<div class="t" style="left:89px;top:188px;height:16px;line-height:16px;font-size:9.6px;color:#66696e;font-weight:400;">主材</div>
<div class="b" style="left:0;top:208.60px;width:164px;height:27.40px;background:#ffffff;border-bottom:1px solid #f1f2f6;box-sizing:border-box;"></div>
<div class="t" style="left:7px;top:216px;height:16px;line-height:16px;font-size:9.6px;color:#66696e;font-weight:400;">脚手架钢管</div>
<div class="t" style="left:89px;top:216px;height:16px;line-height:16px;font-size:9.6px;color:#66696e;font-weight:400;">不锈钢</div>
<div class="b" style="left:0;top:236.00px;width:164px;height:27.40px;background:#fafafa;border-bottom:1px solid #f1f2f6;box-sizing:border-box;"></div>
<div class="t" style="left:7px;top:243px;height:16px;line-height:16px;font-size:9.6px;color:#66696e;font-weight:400;">螺纹钢</div>
<div class="t" style="left:89px;top:243px;height:16px;line-height:16px;font-size:9.6px;color:#66696e;font-weight:400;">钢筋</div>
<div class="b" style="left:0;top:263.40px;width:164px;height:27.40px;background:#ffffff;border-bottom:1px solid #f1f2f6;box-sizing:border-box;"></div>
<div class="t" style="left:7px;top:270px;height:16px;line-height:16px;font-size:9.6px;color:#66696e;font-weight:400;">配电箱&nbsp;<span style="font-size:9.77px;display:inline-block;transform:scaleY(1.12);transform-origin:0 7.8px">AL4/6</span></div>
<div class="t" style="left:89px;top:270px;height:16px;line-height:16px;font-size:9.6px;color:#66696e;font-weight:400;">主材</div>
<div class="b" style="left:0;top:290.80px;width:164px;height:27.40px;background:#fafafa;border-bottom:1px solid #f1f2f6;box-sizing:border-box;"></div>
<div class="t" style="left:7px;top:298px;height:16px;line-height:16px;font-size:9.6px;color:#66696e;font-weight:400;">塔吊<span style="font-size:9.77px;display:inline-block;transform:scaleY(1.12);transform-origin:0 7.8px">TD001</span></div>
<div class="t" style="left:89px;top:298px;height:16px;line-height:16px;font-size:9.6px;color:#66696e;font-weight:400;">其他</div>
<div class="b" style="left:0;top:318.20px;width:164px;height:27.40px;background:#ffffff;border-bottom:1px solid #f1f2f6;box-sizing:border-box;"></div>
<div class="t" style="left:7px;top:325px;height:16px;line-height:16px;font-size:9.6px;color:#66696e;font-weight:400;">挖机<span style="font-size:9.77px;display:inline-block;transform:scaleY(1.12);transform-origin:0 7.8px">WJ001</span></div>
<div class="t" style="left:89px;top:325px;height:16px;line-height:16px;font-size:9.6px;color:#66696e;font-weight:400;">其他</div>
<div class="b" style="left:0;top:345.60px;width:164px;height:27.40px;background:#fafafa;border-bottom:1px solid #f1f2f6;box-sizing:border-box;"></div>
<div class="t" style="left:7px;top:353px;height:16px;line-height:16px;font-size:9.6px;color:#66696e;font-weight:400;">碳素钢</div>
<div class="t" style="left:89px;top:353px;height:16px;line-height:16px;font-size:9.6px;color:#66696e;font-weight:400;">未分类</div>
<div class="b" style="left:0;top:373.00px;width:164px;height:27.40px;background:#ffffff;border-bottom:1px solid #f1f2f6;box-sizing:border-box;"></div>
<div class="t" style="left:7px;top:380px;height:16px;line-height:16px;font-size:9.6px;color:#66696e;font-weight:400;">地板</div>
<div class="t" style="left:89px;top:380px;height:16px;line-height:16px;font-size:9.6px;color:#66696e;font-weight:400;">未分类</div>
<div class="b" style="left:0;top:400.40px;width:164px;height:27.40px;background:#fafafa;border-bottom:1px solid #f1f2f6;box-sizing:border-box;"></div>
<div class="t" style="left:7px;top:407px;height:16px;line-height:16px;font-size:9.6px;color:#66696e;font-weight:400;">配电箱&nbsp;<span style="font-size:9.77px;display:inline-block;transform:scaleY(1.12);transform-origin:0 7.8px">AL1/3</span></div>
<div class="t" style="left:89px;top:407px;height:16px;line-height:16px;font-size:9.6px;color:#66696e;font-weight:400;">主材</div>
<div class="b" style="left:0;top:29.4px;width:164px;height:1.4px;background:linear-gradient(180deg,#f1f3f6,rgba(241,243,246,0));"></div>
</div>
<div class="b" style="left:245px;top:562.8px;width:856px;height:5.2px;background:#c8c8c8;border-radius:1px 3px 3px 1px;"></div>
<div class="b" style="left:1190.3px;top:287px;width:5.7px;height:274px;background:#c8c8c8;border-radius:3px;"></div>
<div class="t" style="left:536px;top:580px;height:16px;line-height:16px;font-size:9.6px;color:#606266;font-weight:400;">共&nbsp;<span style="font-size:9.77px;display:inline-block;transform:scaleY(1.12);transform-origin:0 7.8px">617</span>&nbsp;条</div>
<svg width="6" height="9" style="left:588.8px;top:581.5px"><path d="M4.5 0.5 L1 4.3 L4.5 8" stroke="#c0c4cc" stroke-width="1" fill="none"/></svg>
<div class="t" style="left:598.1px;width:40px;text-align:center;top:579.6px;height:14px;line-height:14px;font-size:9.6px;color:#409eff;font-weight:700;">1</div>
<div class="t" style="left:622.1px;width:40px;text-align:center;top:579.6px;height:14px;line-height:14px;font-size:9.6px;color:#303133;font-weight:700;">2</div>
<div class="t" style="left:646.6px;width:40px;text-align:center;top:579.6px;height:14px;line-height:14px;font-size:9.6px;color:#303133;font-weight:700;">3</div>
<div class="t" style="left:670.7px;width:40px;text-align:center;top:579.6px;height:14px;line-height:14px;font-size:9.6px;color:#303133;font-weight:700;">4</div>
<div class="t" style="left:695.3px;width:40px;text-align:center;top:579.6px;height:14px;line-height:14px;font-size:9.6px;color:#303133;font-weight:700;">5</div>
<div class="t" style="left:719.4px;width:40px;text-align:center;top:579.6px;height:14px;line-height:14px;font-size:9.6px;color:#303133;font-weight:700;">6</div>
<div class="t" style="left:767.7px;width:40px;text-align:center;top:579.6px;height:14px;line-height:14px;font-size:9.6px;color:#303133;font-weight:700;">31</div>
<div class="t" style="left:743.9px;width:40px;text-align:center;top:579.6px;height:14px;line-height:14px;font-size:9.8px;color:#303133;font-weight:700;">···</div>
<svg width="6" height="9" style="left:811.8px;top:581.5px"><path d="M1 0.5 L4.5 4.3 L1 8" stroke="#55585d" stroke-width="0.9" fill="none"/></svg>
<div class="t" style="left:840.6px;top:578px;height:16px;line-height:16px;font-size:8.64px;color:#606266;font-weight:400;">前往</div>
<div class="b" style="left:861.5px;top:575.6px;width:31px;height:18.4px;border:1px solid #e4e7ed;border-radius:3px;box-sizing:border-box;background:#fff;"></div>
<div class="t" style="left:856.8px;width:40px;text-align:center;top:579.6px;height:14px;line-height:14px;font-size:9.8px;color:#606266;">1</div>
<div class="t" style="left:895.3px;top:578px;height:16px;line-height:16px;font-size:8.64px;color:#606266;font-weight:400;">页</div>
<div class="b" style="left:1195.6px;top:18.5px;width:5.2px;height:582.5px;background:#c8c8c8;border-radius:3px;"></div>
</body></html>
